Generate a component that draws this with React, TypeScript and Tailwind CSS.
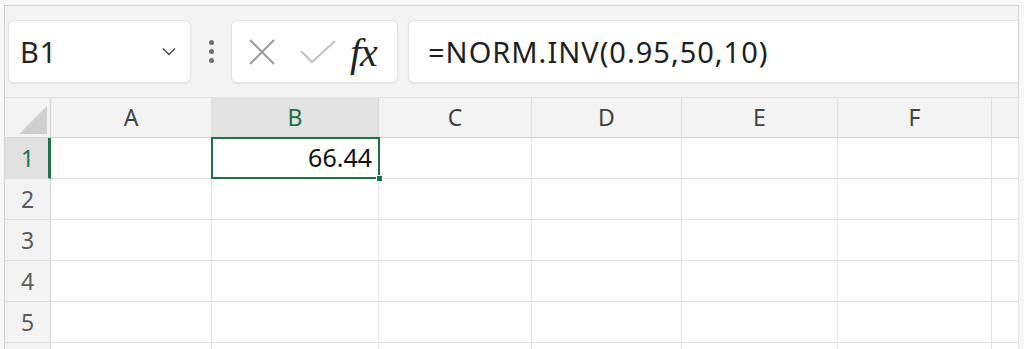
import React from "react";

const font = { fontFamily: '"Noto Sans", "Open Sans", sans-serif' };

const columns = [
  { name: "A", width: "w-[161px]" },
  { name: "B", width: "w-[167px]" },
  { name: "C", width: "w-[153px]" },
  { name: "D", width: "w-[150px]" },
  { name: "E", width: "w-[156px]" },
  { name: "F", width: "w-[154px]" },
  { name: "", width: "w-[27px]" },
];

const rows = [1, 2, 3, 4, 5, 6];

function Corner() {
  return (
    <div className="w-[46px] h-[40px] shrink-0 border-r border-b border-[#d4d4d4] flex items-end justify-end pr-[3px] pb-[3px]">
      <svg width="28" height="28" viewBox="0 0 28 28">
        <polygon points="28,0 28,28 0,28" fill="#cfcfcf" />
      </svg>
    </div>
  );
}

export default function App() {
  return (
    <div className="w-[1024px] h-[349px] bg-[#f8f8f8] overflow-hidden" style={font}>
      <div className="ml-[4px] mt-[5px] w-[1015px] h-[344px] border-l border-t border-r border-[#d2d2d2] bg-[#f3f3f3] flex flex-col">
        {/* formula bar */}
        <div className="flex items-center h-[64px] mt-[14px] pl-[3px]">
          <div className="w-[183px] h-[63px] bg-white rounded-[6px] border border-[#e3e3e3] shadow-[0_1px_2px_rgba(0,0,0,0.06)] flex items-center justify-between pl-[11px] pr-[14px]">
            <span className="text-[29px] text-[#262626] tracking-[1px]">B1</span>
            <svg width="14" height="9" viewBox="0 0 14 9" fill="none" stroke="#444" strokeWidth="1.4">
              <path d="M1 1.5 L7 7.5 L13 1.5" />
            </svg>
          </div>
          <div className="w-[40px] flex flex-col items-center gap-[4px]">
            <span className="w-[5px] h-[5px] rounded-full bg-[#6e6e6e]" />
            <span className="w-[5px] h-[5px] rounded-full bg-[#6e6e6e]" />
            <span className="w-[5px] h-[5px] rounded-full bg-[#6e6e6e]" />
          </div>
          <div className="w-[167px] h-[63px] bg-white rounded-[6px] border border-[#e3e3e3] shadow-[0_1px_2px_rgba(0,0,0,0.06)] flex items-center pl-[16px]">
            <svg width="28" height="26" viewBox="0 0 28 26" fill="none" stroke="#9c9c9c" strokeWidth="2">
              <path d="M2 1 L26 25 M26 1 L2 25" />
            </svg>
            <svg className="ml-[24px]" width="36" height="24" viewBox="0 0 36 24" fill="none" stroke="#c2c2c2" strokeWidth="2">
              <path d="M1 11 L12 22 L35 1" />
            </svg>
            <span
              className="ml-[14px] mt-[2px] text-[40px] italic text-[#222] leading-none tracking-[-1px]"
              style={{ fontFamily: '"Liberation Serif", serif' }}
            >
              fx
            </span>
          </div>
          <div className="ml-[10px] flex-1 h-[63px] bg-white rounded-l-[6px] border border-r-0 border-[#e3e3e3] shadow-[0_1px_2px_rgba(0,0,0,0.06)] flex items-center pl-[19px]">
            <span className="text-[29px] text-[#1f1f1f] tracking-[1px]">=NORM.INV(0.95,50,10)</span>
          </div>
        </div>

        {/* grid */}
        <div className="mt-[14px] flex flex-col border-t border-[#e2e2e2]">
          <div className="flex">
            <Corner />
            {columns.map((c) => (
              <div
                key={c.name || "g"}
                className={`${c.width} h-[40px] shrink-0 border-r border-b flex items-center justify-center text-[23px] ${
                  c.name === "B"
                    ? "bg-[#e3e3e3] text-[#1e7145] border-[#d4d4d4]"
                    : "text-[#424242] border-[#e0e0e0] border-b-[#d4d4d4]"
                }`}
              >
                {c.name}
              </div>
            ))}
          </div>
          {rows.map((r) => (
            <div key={r} className="flex">
              <div
                className={`w-[46px] h-[41px] shrink-0 border-b border-[#e0e0e0] flex items-center justify-center text-[23px] ${
                  r === 1
                    ? "bg-[#e1e1e1] text-[#1e7145] border-r-[3px] border-r-[#1e7145]"
                    : "text-[#5c5c5c] border-r border-r-[#d4d4d4]"
                }`}
              >
                <span className={r === 1 ? "ml-[2px]" : ""}>{r < 6 ? r : ""}</span>
              </div>
              {columns.map((c) => (
                <div
                  key={c.name || "g"}
                  className={`${c.width} h-[41px] shrink-0 bg-white border-r border-b border-[#e2e2e2] relative`}
                >
                  {r === 1 && c.name === "B" && (
                    <div className="absolute z-10 -left-px -top-px w-[169px] h-[42px] border-2 border-[#1e7145] flex items-center justify-end pr-[6px]">
                      <span className="text-[25px] text-[#111]">66.44</span>
                      <span className="absolute -right-[5px] -bottom-[5px] w-[7px] h-[7px] bg-[#1e7145] border border-white" />
                    </div>
                  )}
                </div>
              ))}
            </div>
          ))}
        </div>
      </div>
    </div>
  );
}
